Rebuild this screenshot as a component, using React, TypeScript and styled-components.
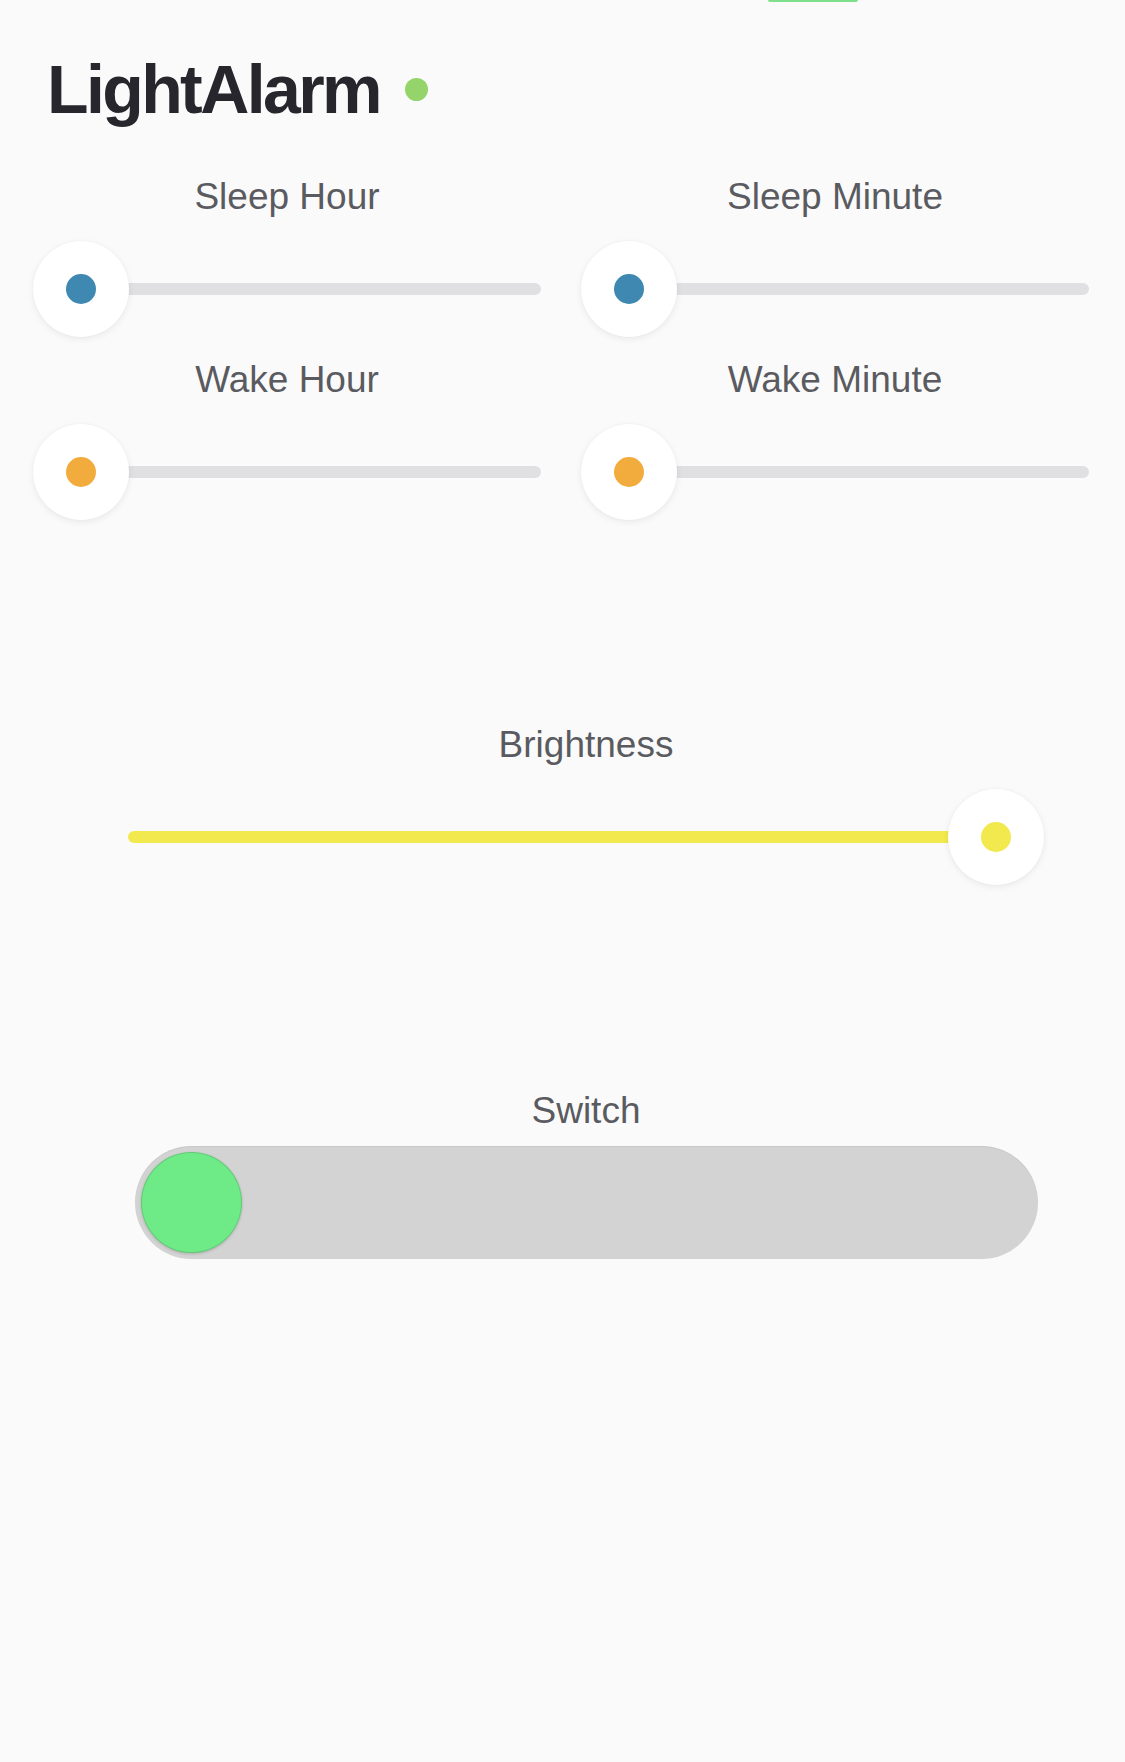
import { FC } from 'react';
import styled, { createGlobalStyle } from 'styled-components';

const GlobalStyle = createGlobalStyle`
  html, body {
    margin: 0;
    padding: 0;
    background: #fafafa;
  }
  body {
    font-family: 'Liberation Sans', Arial, Helvetica, sans-serif;
    color: #5a5b60;
  }
`;

const Page = styled.div`
  min-height: 1762px;
  background: #fafafa;
`;

const StatusStrip = styled.div`
  width: 90px;
  height: 2px;
  margin-left: 768px;
  background: #7ee08a;
  border-radius: 0 0 2px 2px;
`;

const Header = styled.div`
  display: flex;
  align-items: center;
  gap: 25px;
  margin-top: 53px;
  padding-left: 47px;
`;

const Title = styled.h1`
  margin: 0;
  font-size: 68px;
  line-height: 68px;
  font-weight: 700;
  letter-spacing: -2.6px;
  color: #26262c;
`;

const StatusDot = styled.span<{ color: string }>`
  width: 23px;
  height: 23px;
  border-radius: 50%;
  background: ${p => p.color};
`;

const TimeGrid = styled.div`
  display: grid;
  grid-template-columns: 1fr 1fr;
  column-gap: 40px;
  row-gap: 24px;
  margin-top: 55px;
  padding: 0 36px 0 33px;
`;

const Control = styled.div`
  display: flex;
  flex-direction: column;
  align-items: center;
`;

const Label = styled.div`
  font-size: 37px;
  line-height: 37px;
  color: #5a5b60;
  margin-bottom: 26px;
  white-space: nowrap;
`;

const SliderBox = styled.div`
  position: relative;
  width: 100%;
  height: 96px;
  display: flex;
  align-items: center;
`;

const Rail = styled.div`
  position: relative;
  width: 100%;
  height: 12px;
  border-radius: 6px;
  background: #e0e0e2;
  overflow: hidden;
`;

const Fill = styled.div<{ color: string }>`
  height: 100%;
  background: ${p => p.color};
`;

const Thumb = styled.div`
  position: absolute;
  top: 0;
  width: 96px;
  height: 96px;
  border-radius: 50%;
  background: #ffffff;
  box-shadow: 0 2px 7px rgba(0, 0, 0, 0.07), 0 0 2px rgba(0, 0, 0, 0.04);
  display: flex;
  align-items: center;
  justify-content: center;
`;

const ThumbDot = styled.div<{ color: string }>`
  width: 30px;
  height: 30px;
  border-radius: 50%;
  background: ${p => p.color};
`;

const BottomSection = styled.div`
  margin-top: 206px;
  margin-left: 128px;
  width: 916px;
  display: flex;
  flex-direction: column;
  gap: 207px;
`;

const SwitchLabel = styled(Label)`
  margin-bottom: 17px;
`;

const SwitchTrack = styled.div`
  box-sizing: border-box;
  width: 903px;
  height: 113px;
  padding: 6px;
  border-radius: 57px;
  background: #d3d3d3;
  box-shadow: inset 0 1px 1px rgba(0, 0, 0, 0.06);
  display: flex;
  align-items: center;
`;

const SwitchKnob = styled.div<{ on: boolean }>`
  width: 101px;
  height: 101px;
  border-radius: 50%;
  background: #6eea87;
  border: 1px solid rgba(0, 0, 0, 0.12);
  box-sizing: border-box;
  box-shadow: 0 1px 3px rgba(0, 0, 0, 0.18);
  margin-left: ${p => (p.on ? 'auto' : '0')};
`;

type SliderProps = {
  label: string;
  value: number;
  max: number;
  dotColor: string;
  fillColor?: string;
};

const Slider: FC<SliderProps> = props => {
  const pct = props.value / props.max;
  return (
    <Control>
      <Label>{props.label}</Label>
      <SliderBox>
        <Rail>
          {props.fillColor && (
            <Fill color={props.fillColor} style={{ width: `${pct * 100}%` }} />
          )}
        </Rail>
        <Thumb style={{ left: `calc(${pct * 100}% - ${pct * 96}px)` }}>
          <ThumbDot color={props.dotColor} />
        </Thumb>
      </SliderBox>
    </Control>
  );
};

const times = [
  { label: 'Sleep Hour', max: 23, color: '#3e88b1' },
  { label: 'Sleep Minute', max: 59, color: '#3e88b1' },
  { label: 'Wake Hour', max: 23, color: '#f2ac3d' },
  { label: 'Wake Minute', max: 59, color: '#f2ac3d' },
];

const App: FC = () => {
  return (
    <Page>
      <GlobalStyle />
      <StatusStrip />
      <Header>
        <Title>LightAlarm</Title>
        <StatusDot color="#95d46a" />
      </Header>
      <TimeGrid>
        {times.map(t => (
          <Slider key={t.label} label={t.label} value={0} max={t.max} dotColor={t.color} />
        ))}
      </TimeGrid>
      <BottomSection>
        <Slider label="Brightness" value={255} max={255} dotColor="#f2e94e" fillColor="#f2e94e" />
        <Control>
          <SwitchLabel>Switch</SwitchLabel>
          <SwitchTrack>
            <SwitchKnob on={false} />
          </SwitchTrack>
        </Control>
      </BottomSection>
    </Page>
  );
};

export default App;
